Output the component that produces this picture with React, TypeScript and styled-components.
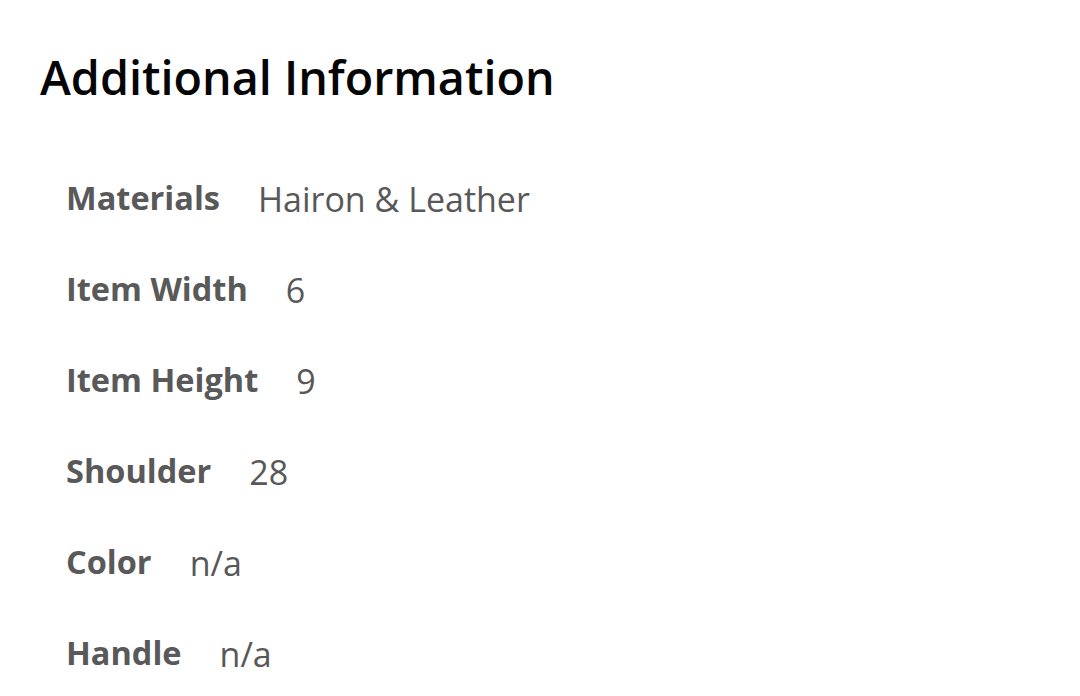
import React from "react";
import styled, { createGlobalStyle } from "styled-components";

const Global = createGlobalStyle`
  html, body { margin: 0; padding: 0; background: #fff; }
  body { font-family: "Open Sans", "Noto Sans", sans-serif; }
`;

const Page = styled.div`
  padding: 46px 40px 0 40px;
`;

const Title = styled.h2`
  margin: 0;
  font-size: 46.7px;
  font-weight: 600;
  color: #050505;
  line-height: 62px;
`;

const List = styled.div`
  display: flex;
  flex-direction: column;
  padding: 66px 0 0 26px;
`;

const Row = styled.div`
  display: flex;
  align-items: baseline;
  height: 91px;
  gap: 38px;
`;

const Label = styled.span`
  font-size: 32.5px;
  font-weight: 700;
  color: #595959;
`;

const Value = styled.span`
  font-size: 34px;
  font-weight: 400;
  color: #585858;
  position: relative;
  top: 2px;
`;

const rows: [string, string][] = [
  ["Materials", "Hairon & Leather"],
  ["Item Width", "6"],
  ["Item Height", "9"],
  ["Shoulder", "28"],
  ["Color", "n/a"],
  ["Handle", "n/a"],
];

export default function App() {
  return (
    <>
      <Global />
      <Page>
        <Title>Additional Information</Title>
        <List>
          {rows.map(([l, v]) => (
            <Row key={l}>
              <Label>{l}</Label>
              <Value>{v}</Value>
            </Row>
          ))}
        </List>
      </Page>
    </>
  );
}
